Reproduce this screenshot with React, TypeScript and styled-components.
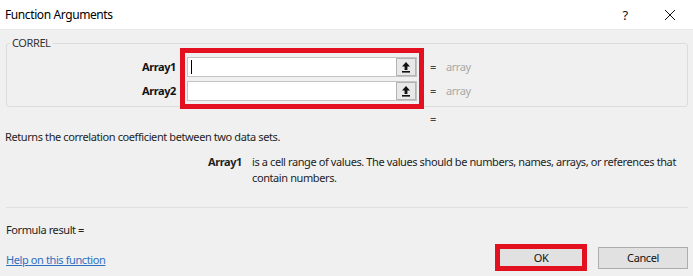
import styled, { createGlobalStyle } from 'styled-components';

const Global = createGlobalStyle`
  html, body { margin: 0; padding: 0; background: #f0f0f0; }
  body {
    font-family: "Noto Sans", "Open Sans", sans-serif;
    font-size: 11px;
    letter-spacing: -0.4px;
    color: #1e1e1e;
  }
`;

const Dialog = styled.div`
  width: 693px;
  height: 276px;
  background: #f0f0f0;
  overflow: hidden;
  display: flex;
  flex-direction: column;
`;

const TitleBar = styled.div`
  height: 29px;
  flex: none;
  background: #fff;
  border-bottom: 1px solid #e8e8e8;
  display: flex;
  align-items: center;
  padding-left: 5px;
`;

const Title = styled.div`
  flex: 1;
  font-size: 12px;
  color: #000;
`;

const TitleButton = styled.div<{ $w: number }>`
  width: ${({ $w }) => $w}px;
  height: 29px;
  display: grid;
  place-items: center;
  font-size: 13px;
  color: #111;
`;

const Body = styled.div`
  flex: 1;
  padding: 13px 5px 0 6px;
  display: flex;
  flex-direction: column;
`;

const Group = styled.fieldset`
  margin: 0;
  padding: 0;
  height: 64px;
  width: 682px;
  box-sizing: border-box;
  border: 1px solid #dcdcdc;
  border-radius: 3px;
  display: grid;
  grid-template-columns: 173px 244px 1fr;
  align-items: start;
  position: relative;
`;

const Legend = styled.legend`
  position: absolute;
  top: -8px;
  left: 3px;
  padding: 0 2px;
  background: #f0f0f0;
  color: #333;
  font-size: 11px;
  line-height: 14px;
`;

const Column = styled.div`
  display: flex;
  flex-direction: column;
  gap: 4px;
  padding-top: 13px;
`;

const Label = styled.div`
  height: 20px;
  line-height: 20px;
  text-align: right;
  padding-right: 4px;
  font-weight: 700;
  color: #111;
`;

const Highlight = styled.div`
  margin-top: 4px;
  height: 61px;
  box-sizing: border-box;
  border: 5px solid #e3111f;
  padding: 4px 2px 2px;
  display: flex;
  flex-direction: column;
  gap: 4px;
  position: relative;
  z-index: 1;
`;

const Input = styled.div`
  height: 20px;
  box-sizing: border-box;
  border: 1px solid #c4c4c4;
  background: #fff;
  display: flex;
  align-items: stretch;
  justify-content: space-between;
`;

const Caret = styled.div`
  width: 1px;
  height: 14px;
  background: #000;
  margin: 2px 0 0 3px;
`;

const RefButton = styled.div`
  width: 20px;
  box-sizing: border-box;
  border: 1px solid #b4b4b4;
  background: #e8e8e8;
  display: grid;
  place-items: center;
`;

const Value = styled.div`
  height: 20px;
  line-height: 20px;
  padding-left: 6px;
  display: flex;
  gap: 10px;
`;

const Eq = styled.span`
  color: #444;
`;

const Muted = styled.span`
  color: #a8a8a8;
`;

const LoneEq = styled.div`
  margin: 5px 0 0 424px;
  height: 14px;
  line-height: 14px;
  color: #444;
`;

const Summary = styled.div`
  margin: 4px 0 0 -1px;
  line-height: 14px;
  color: #1e1e1e;
`;

const ArgHelp = styled.div`
  margin-top: 10px;
  display: grid;
  grid-template-columns: 246px 1fr;
  line-height: 16px;
`;

const ArgName = styled.div`
  text-align: right;
  font-weight: 700;
  padding-right: 10px;
`;

const ArgText = styled.div`
  padding-right: 12px;
`;

const Divider = styled.div`
  margin-top: 21px;
  height: 1px;
  width: 682px;
  background: #dfdfdf;
`;

const Footer = styled.div`
  flex: 1;
  display: grid;
  grid-template-columns: 1fr auto;
  align-items: end;
`;

const FooterText = styled.div`
  align-self: start;
  display: flex;
  flex-direction: column;
  gap: 16px;
  padding-top: 15px;
  line-height: 14px;
`;

const Link = styled.a`
  color: #2f6fc0;
  text-decoration: underline;
  cursor: pointer;
`;

const Buttons = styled.div`
  display: flex;
  align-items: center;
  gap: 11px;
  padding-bottom: 5px;
`;

const Button = styled.button<{ $marked?: boolean }>`
  font-family: inherit;
  font-size: 11px;
  letter-spacing: inherit;
  color: #111;
  background: #e1e1e1;
  box-sizing: border-box;
  padding: 0;
  width: ${({ $marked }) => ($marked ? 92 : 90)}px;
  height: ${({ $marked }) => ($marked ? 27 : 22)}px;
  border: ${({ $marked }) => ($marked ? '5px solid #e3111f' : '1px solid #adadad')};
`;

function RefIcon() {
  return (
    <svg width="10" height="12" viewBox="0 0 10 12" aria-hidden>
      <path d="M5 1L1 5.5h2.6V9h2.8V5.5H9z" fill="#111" />
      <rect x="1" y="10" width="8" height="1.6" fill="#111" />
    </svg>
  );
}

function CloseIcon() {
  return (
    <svg width="12" height="12" viewBox="0 0 12 12" aria-hidden>
      <path d="M1 1l10 10M11 1L1 11" stroke="#111" strokeWidth="1" fill="none" />
    </svg>
  );
}

export default function App() {
  return (
    <Dialog>
      <Global />
      <TitleBar>
        <Title>Function Arguments</Title>
        <TitleButton $w={44}>?</TitleButton>
        <TitleButton $w={46}>
          <CloseIcon />
        </TitleButton>
      </TitleBar>
      <Body>
        <Group>
          <Legend>CORREL</Legend>
          <Column>
            <Label>Array1</Label>
            <Label>Array2</Label>
          </Column>
          <Highlight>
            <Input>
              <Caret />
              <RefButton>
                <RefIcon />
              </RefButton>
            </Input>
            <Input>
              <span />
              <RefButton>
                <RefIcon />
              </RefButton>
            </Input>
          </Highlight>
          <Column>
            <Value>
              <Eq>=</Eq>
              <Muted>array</Muted>
            </Value>
            <Value>
              <Eq>=</Eq>
              <Muted>array</Muted>
            </Value>
          </Column>
        </Group>
        <LoneEq>=</LoneEq>
        <Summary>Returns the correlation coefficient between two data sets.</Summary>
        <ArgHelp>
          <ArgName>Array1</ArgName>
          <ArgText>
            is a cell range of values. The values should be numbers, names, arrays, or references that
            contain numbers.
          </ArgText>
        </ArgHelp>
        <Divider />
        <Footer>
          <FooterText>
            <div>Formula result =</div>
            <Link>Help on this function</Link>
          </FooterText>
          <Buttons>
            <Button $marked>OK</Button>
            <Button>Cancel</Button>
          </Buttons>
        </Footer>
      </Body>
    </Dialog>
  );
}
